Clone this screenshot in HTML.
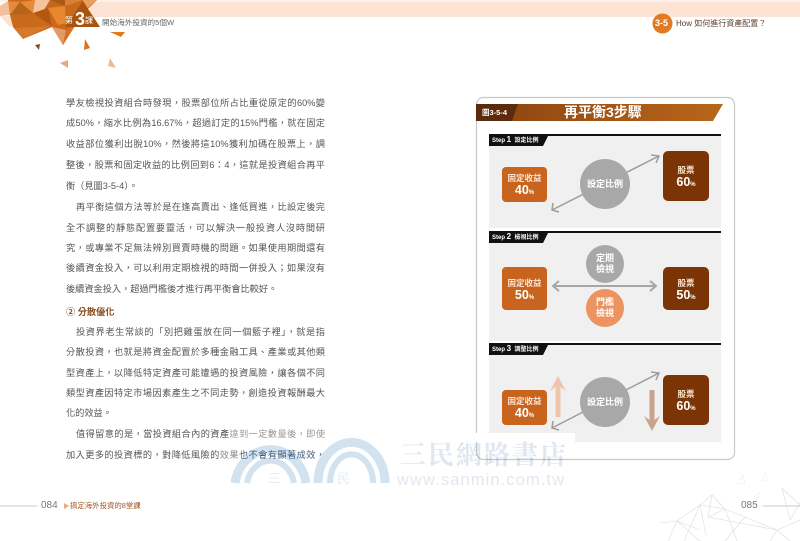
<!DOCTYPE html>
<html><head><meta charset="utf-8">
<style>
html,body{margin:0;padding:0;background:#fff}
#p{position:relative;width:800px;height:541px;overflow:hidden;background:#fff;font-family:"Liberation Sans","Noto Sans CJK TC",sans-serif}
svg{position:absolute;left:0;top:0}
.l{position:absolute;left:66px;width:259px;height:14px;line-height:14px;font-size:9.2px;color:#555;text-align:justify;text-align-last:justify}
.i{left:76px;width:249px}
.n{text-align:left;text-align-last:left;width:280px}
.t{position:absolute;white-space:nowrap}
</style></head><body><div id="p">
<svg width="800" height="541" viewBox="0 0 800 541">
<rect x="0" y="0" width="800" height="2" fill="#fdf3ec"/>
<rect x="90" y="2" width="710" height="15" fill="#fde3d3"/>
<g>
<polygon points="0,16 13,16 13,25 10,27" fill="#fde0cd"/>
<polygon points="0,6 8,1 10,15 0,16" fill="#f2c09c"/>
<polygon points="8,0 97,0 83,14 100,27 75,26 63,45 52,27 23,39 13,27 10,15" fill="#c8691c"/>
<polygon points="8,1 20,2 10,15" fill="#e58a3a"/>
<polygon points="20,2 33,13 10,15" fill="#b4641c"/>
<polygon points="20,2 35,0 33,13" fill="#e98a37"/>
<polygon points="35,0 50,0 42,13 33,13" fill="#f6c39c"/>
<polygon points="50,0 65,6 48,8" fill="#c4671c"/>
<polygon points="48,8 65,6 66,23 58,25" fill="#e8872f"/>
<polygon points="50,0 65,0 65,6" fill="#a85a16"/>
<polygon points="65,0 83,0 65,6" fill="#d9803a"/>
<polygon points="10,15 33,13 50,26 15,28" fill="#c8691c"/>
<polygon points="33,13 48,8 52,26" fill="#b4570f"/>
<polygon points="15,28 50,26 23,39" fill="#d8782a"/>
<polygon points="52,27 66,30 63,45" fill="#e39a65"/>
<polygon points="66,30 75,25 63,45" fill="#d8701f"/>
<polygon points="83,0 97,0 82,13" fill="#e8a060"/>
<polygon points="83,1 100,27 65,27" fill="#a95310"/>
<polygon points="110,32 125,32 121,37" fill="#e07b22"/>
<polygon points="85,39 90,48 84,50" fill="#d9711e"/>
<polygon points="35,45 40,44 39,50" fill="#8a4b1c"/>
<polygon points="60,63 68,60 68,68" fill="#e8a884"/>
<polygon points="110,58 116,68 108,66" fill="#eebb9a"/>
</g>
<circle cx="662.5" cy="23.5" r="10" fill="#e27a24"/>
<rect x="476.5" y="97.5" width="258" height="362" rx="7" fill="#fff" stroke="#c8c8c8" stroke-width="1.2"/>
<defs><linearGradient id="g" x1="0" x2="1" y1="0" y2="0"><stop offset="0" stop-color="#8a4310"/><stop offset="1" stop-color="#b9661c"/></linearGradient></defs>
<polygon points="476,104 723,104 713,121 476,121" fill="url(#g)"/>
<polygon points="476,104 518,104 512,121 476,121" fill="#5c2a0c"/>
<rect x="489" y="134" width="232" height="94" fill="#f0f0f0"/>
<rect x="489" y="134" width="232" height="2" fill="#111"/>
<polygon points="489,134 549,134 543,146 489,146" fill="#111"/>
<rect x="489" y="231" width="232" height="110" fill="#f0f0f0"/>
<rect x="489" y="231" width="232" height="2" fill="#111"/>
<polygon points="489,231 549,231 543,243 489,243" fill="#111"/>
<rect x="489" y="343" width="232" height="99" fill="#f0f0f0"/>
<rect x="489" y="343" width="232" height="2" fill="#111"/>
<polygon points="489,343 549,343 543,355 489,355" fill="#111"/>
<g fill="none" stroke="#9c9c9c" stroke-width="1.5">
<path d="M552,210 L659,156 M651,155 L659,156 L656,163 M553,203 L552,210 L559,212"/>
<path d="M552,428 L659,373 M651,372 L659,373 L656,380 M553,421 L552,428 L559,430"/>
</g>
<path d="M554,286 H655 M559,281 L553,286 L559,291 M650,281 L656,286 L650,291" fill="none" stroke="#a2a7aa" stroke-width="2"/>
<rect x="502" y="167" width="45" height="35" rx="4" fill="#c8641e"/>
<rect x="663" y="151" width="46" height="50" rx="5" fill="#7a3405"/>
<circle cx="605" cy="184" r="25" fill="#a8a8a8"/>
<rect x="502" y="267" width="45" height="43" rx="4" fill="#c8641e"/>
<rect x="663" y="267" width="46" height="43" rx="5" fill="#7a3405"/>
<circle cx="605" cy="264" r="19" fill="#a8a8a8"/>
<circle cx="605" cy="308" r="19" fill="#ec935f"/>
<rect x="502" y="390" width="45" height="35" rx="4" fill="#c8641e"/>
<rect x="663" y="375" width="46" height="50" rx="5" fill="#7a3405"/>
<circle cx="605" cy="402" r="25" fill="#a8a8a8"/>
<polygon points="558,376 566,391 560.5,387 560.5,417 555.5,417 555.5,387 550,391" fill="#efc4aa"/>
<polygon points="652,431 660,416 654.5,420 654.5,390 649.5,390 649.5,420 644,416" fill="#c9a48c"/>
<rect x="470" y="433" width="105" height="9" fill="#fff"/>
<g fill="none" stroke="#d3e2ef" style="mix-blend-mode:multiply">
<path d="M235,483 A36,40 0 0 1 306,483" stroke-width="9"/>
<path d="M247,483 A24,28 0 0 1 294,483" stroke-width="6"/>
<path d="M318,483 A33,40 0 0 1 385,483" stroke-width="9"/>
<path d="M330,483 A21,28 0 0 1 373,483" stroke-width="6"/>
</g>
<g fill="none" stroke="#dcdcdc" stroke-width=".6">
<path d="M660,523 L677,521 L700,505 L712,495 L725,509 L745,517 L777,530 L800,520 M712,495 L708,517 M700,505 L706,535 M700,505 L684,541 M677,521 L700,541 M677,521 L668,541 M700,505 L725,509 L737,541 M725,509 L708,517 L777,530 L770,541 M745,517 L725,541 M782,488 L790,520 L800,503 M782,488 L800,505 M777,530 L790,541 M677,521 L700,530"/>
<path d="M737,483 L743,475 L745,484 Z M762,480 L766,473 L767,481 Z M754,497 L760,492 L757,500 Z" stroke="#eeeeee"/>
</g>
<rect x="0" y="505.5" width="37" height="1" fill="#c8c8c8"/>
<rect x="763" y="505.5" width="37" height="1" fill="#c8c8c8"/>
<polygon points="64,503 69,506 64,509" fill="#f0a878"/>
</svg>

<div class="t" style="left:65px;top:15px;font-size:8px;line-height:12px;color:#fff">第</div>
<div class="t" style="left:75px;top:9px;font-size:18px;line-height:20px;font-weight:700;color:#fff">3</div>
<div class="t" style="left:85px;top:15px;font-size:8px;line-height:12px;color:#fff">課</div>
<div class="t" style="left:102px;top:17px;font-size:7.6px;line-height:11px;color:#666">開始海外投資的5個W</div>
<div class="t" style="left:655px;top:18px;font-size:9px;line-height:11px;font-weight:700;color:#fff">3-5</div>
<div class="t" style="left:676px;top:18px;font-size:8px;line-height:11px;color:#5a3d30">How 如何進行資產配置？</div>

<div class="l" style="top:96px">學友檢視投資組合時發現，股票部位所占比重從原定的60%變</div>
<div class="l" style="top:116px">成50%，縮水比例為16.67%，超過訂定的15%門檻，就在固定</div>
<div class="l" style="top:137px">收益部位獲利出脫10%，然後將這10%獲利加碼在股票上，調</div>
<div class="l" style="top:158px">整後，股票和固定收益的比例回到6：4，這就是投資組合再平</div>
<div class="l n" style="top:179px">衡（見圖3-5-4）。</div>
<div class="l i" style="top:200px">再平衡這個方法等於是在逢高賣出、逢低買進，比設定後完</div>
<div class="l" style="top:221px">全不調整的靜態配置要靈活，可以解決一般投資人沒時間研</div>
<div class="l" style="top:241px">究，或專業不足無法辨別買賣時機的問題。如果使用期間還有</div>
<div class="l" style="top:261px">後續資金投入，可以利用定期檢視的時間一併投入；如果沒有</div>
<div class="l n" style="top:282px">後續資金投入，超過門檻後才進行再平衡會比較好。</div>
<div class="l n" style="top:305px;font-weight:700;color:#8a4a1a">② 分散優化</div>
<div class="l i" style="top:325px">投資界老生常談的「別把雞蛋放在同一個籃子裡」，就是指</div>
<div class="l" style="top:345px">分散投資，也就是將資金配置於多種金融工具、產業或其他類</div>
<div class="l" style="top:366px">型資產上，以降低特定資產可能遭遇的投資風險，讓各個不同</div>
<div class="l" style="top:386px">類型資產因特定市場因素產生之不同走勢，創造投資報酬最大</div>
<div class="l n" style="top:406px">化的效益。</div>
<div class="l i" style="top:427px">值得留意的是，當投資組合內的資產<span style="color:#999">達到一定數量後，即使</span></div>
<div class="l" style="top:448px">加入更多的投資標的，對降低風險的<span style="color:#888">效果</span><span style="color:#44607c">也不會有顯著成效，</span></div>

<div class="t" style="left:482px;top:107px;font-size:7.5px;line-height:11px;font-weight:700;color:#fff">圖3-5-4</div>
<div class="t" style="left:564px;top:104px;font-size:14px;line-height:17px;font-weight:700;color:#fff">再平衡3步驟</div>

<div class="t" style="left:492px;top:135px;font-size:6px;line-height:10px;font-weight:700;color:#fff">Step <span style="font-size:8px">1</span>&nbsp; 設定比例</div>
<div class="t" style="left:492px;top:232px;font-size:6px;line-height:10px;font-weight:700;color:#fff">Step <span style="font-size:8px">2</span>&nbsp; 檢視比例</div>
<div class="t" style="left:492px;top:344px;font-size:6px;line-height:10px;font-weight:700;color:#fff">Step <span style="font-size:8px">3</span>&nbsp; 調整比例</div>

<div class="t" style="left:502px;width:45px;top:173px;text-align:center;font-size:8.5px;line-height:10px;font-weight:700;color:#fbe6d6">固定收益</div>
<div class="t" style="left:502px;width:45px;top:183px;text-align:center;font-size:12.5px;line-height:14px;font-weight:700;color:#fff">40<span style="font-size:6px">%</span></div>
<div class="t" style="left:663px;width:46px;top:165px;text-align:center;font-size:8.5px;line-height:10px;font-weight:700;color:#fbe6d6">股票</div>
<div class="t" style="left:663px;width:46px;top:175px;text-align:center;font-size:12.5px;line-height:14px;font-weight:700;color:#fff">60<span style="font-size:6px">%</span></div>
<div class="t" style="left:580px;width:50px;top:178px;text-align:center;font-size:9px;line-height:12px;font-weight:700;color:#fff">設定比例</div>

<div class="t" style="left:502px;width:45px;top:278px;text-align:center;font-size:8.5px;line-height:10px;font-weight:700;color:#fbe6d6">固定收益</div>
<div class="t" style="left:502px;width:45px;top:288px;text-align:center;font-size:12.5px;line-height:14px;font-weight:700;color:#fff">50<span style="font-size:6px">%</span></div>
<div class="t" style="left:663px;width:46px;top:278px;text-align:center;font-size:8.5px;line-height:10px;font-weight:700;color:#fbe6d6">股票</div>
<div class="t" style="left:663px;width:46px;top:288px;text-align:center;font-size:12.5px;line-height:14px;font-weight:700;color:#fff">50<span style="font-size:6px">%</span></div>
<div class="t" style="left:586px;width:38px;top:253px;text-align:center;font-size:9px;line-height:11px;font-weight:700;color:#fff">定期<br>檢視</div>
<div class="t" style="left:586px;width:38px;top:297px;text-align:center;font-size:9px;line-height:11px;font-weight:700;color:#fff">門檻<br>檢視</div>

<div class="t" style="left:502px;width:45px;top:396px;text-align:center;font-size:8.5px;line-height:10px;font-weight:700;color:#fbe6d6">固定收益</div>
<div class="t" style="left:502px;width:45px;top:406px;text-align:center;font-size:12.5px;line-height:14px;font-weight:700;color:#fff">40<span style="font-size:6px">%</span></div>
<div class="t" style="left:663px;width:46px;top:389px;text-align:center;font-size:8.5px;line-height:10px;font-weight:700;color:#fbe6d6">股票</div>
<div class="t" style="left:663px;width:46px;top:399px;text-align:center;font-size:12.5px;line-height:14px;font-weight:700;color:#fff">60<span style="font-size:6px">%</span></div>
<div class="t" style="left:580px;width:50px;top:396px;text-align:center;font-size:9px;line-height:12px;font-weight:700;color:#fff">設定比例</div>

<div class="t" style="left:268px;top:472px;font-size:13px;line-height:14px;color:#e4edf5">三</div>
<div class="t" style="left:337px;top:472px;font-size:13px;line-height:14px;color:#e4edf5">民</div>
<div class="t" style="left:400px;top:441px;font-family:'Liberation Serif','Noto Serif CJK SC',serif;font-size:26px;font-weight:700;line-height:30px;letter-spacing:2px;color:#dfe7f1;mix-blend-mode:multiply">三民網路書店</div>
<div class="t" style="left:397px;top:471px;font-size:16.5px;line-height:18px;letter-spacing:1.1px;color:#e2e8ef">www.sanmin.com.tw</div>

<div class="t" style="left:41px;top:500px;font-size:10px;line-height:12px;color:#777">084</div>
<div class="t" style="left:70px;top:501px;font-size:7.4px;line-height:10px;color:#a0582a">搞定海外投資的8堂課</div>
<div class="t" style="left:741px;top:500px;font-size:10px;line-height:12px;color:#777">085</div>
</div></body></html>
